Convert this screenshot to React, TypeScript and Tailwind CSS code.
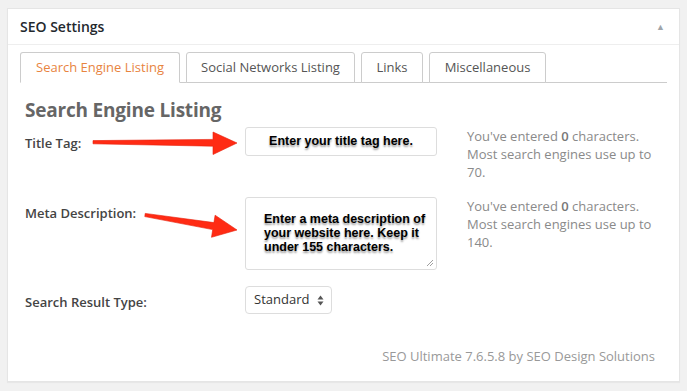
import React from "react";

const tabs = [
  { label: "Search Engine Listing", w: "w-[160px]", active: true },
  { label: "Social Networks Listing", w: "w-[169px]", active: false },
  { label: "Links", w: "w-[62px]", active: false },
  { label: "Miscellaneous", w: "w-[117px]", active: false },
];

function HelpText({ max }: { max: number }) {
  return (
    <p className="w-[195px] shrink-0 text-[13px] leading-[18px] text-[#8a8a8a]">
      You've entered <b className="font-semibold text-[#777]">0</b> characters. Most search engines use up to {max}.
    </p>
  );
}

function Arrows() {
  return (
    <svg className="absolute left-0 top-0 pointer-events-none" width="687" height="391" viewBox="0 0 687 391">
      <polygon
        points="93,140.6 213,139.4 213,132 237,143 213,154.5 213,146.2 93,143.8"
        fill="#ff2b14"
        stroke="#e61f0a"
        strokeWidth="0.6"
        strokeLinejoin="round"
      />
      <polygon
        points="145.2,213.4 213.9,222.6 215.1,215.2 237,230 211.5,237.3 212.7,229.6 144.8,216.6"
        fill="#ff2b14"
        stroke="#e61f0a"
        strokeWidth="0.6"
        strokeLinejoin="round"
      />
    </svg>
  );
}

export default function App() {
  return (
    <div className="relative h-[391px] w-[687px] bg-[#f1f1f1] pl-[7px] pt-[8px] font-['Open_Sans',sans-serif]">
      <div className="h-[374px] w-[673px] border border-[#e5e5e5] bg-white shadow-[0_1px_1px_rgba(0,0,0,0.04)]">
        {/* header */}
        <div className="flex h-[36px] items-center justify-between border-b border-[#eee] pl-[12px] pr-[14px]">
          <h2 className="text-[14px] font-semibold text-[#23282d]">SEO Settings</h2>
          <span className="text-[9px] text-[#a0a5aa]">▲</span>
        </div>

        {/* tabs */}
        <div className="ml-[12px] mr-[12px] mt-[7px] flex gap-[6px] border-b border-[#ccc]">
          {tabs.map((t) => (
            <div
              key={t.label}
              className={`${t.w} -mb-px flex h-[31px] items-center justify-center rounded-t-[3px] border border-[#ccc] text-[13px] ${
                t.active ? "border-b-white bg-white text-[#e8843f]" : "bg-white text-[#555]"
              }`}
            >
              {t.label}
            </div>
          ))}
        </div>

        <div className="pl-[17px] pr-[24px]">
          <h3 className="mt-[15px] text-[19px] leading-[24px] font-bold tracking-[-0.2px] text-[#666]">
            Search Engine Listing
          </h3>

          {/* title tag row */}
          <div className="mt-[5px] flex">
            <div className="w-[220px] shrink-0 pt-[7px] text-[13px] leading-[18px] font-semibold text-[#444]">Title Tag:</div>
            <div className="flex h-[29px] w-[192px] shrink-0 items-center justify-center rounded-[3px] border border-[#ddd] bg-white font-['Liberation_Sans',Arial,sans-serif] text-[12.5px] font-bold text-black [text-shadow:0_2px_2px_rgba(0,0,0,0.4)]">
              Enter your title tag here.
            </div>
            <div className="ml-[30px]">
              <HelpText max={70} />
            </div>
          </div>

          {/* meta description row */}
          <div className="mt-[16px] flex">
            <div className="w-[220px] shrink-0 pt-[7px] text-[13px] leading-[18px] font-semibold text-[#444]">Meta Description:</div>
            <div className="relative h-[73px] w-[192px] shrink-0 rounded-[3px] border border-[#ddd] bg-white pl-[18px] pt-[14px] font-['Liberation_Sans',Arial,sans-serif] text-[12.5px] leading-[14px] font-bold text-black [text-shadow:0_2px_2px_rgba(0,0,0,0.4)]">
              Enter a meta description of your website here. Keep it under 155 characters.
              <svg className="absolute bottom-[2px] right-[2px]" width="8" height="8" viewBox="0 0 8 8">
                <path d="M7 1 L1 7 M7 4 L4 7" stroke="#888" strokeWidth="0.8" />
              </svg>
            </div>
            <div className="ml-[30px]">
              <HelpText max={140} />
            </div>
          </div>

          {/* search result type */}
          <div className="mt-[16px] flex">
            <div className="w-[220px] shrink-0 pt-[7px] text-[13px] leading-[18px] font-semibold text-[#444]">Search Result Type:</div>
            <div className="flex h-[28px] w-[87px] shrink-0 items-center justify-between rounded-[4px] border border-[#ddd] bg-white pl-[8px] pr-[7px] text-[13px] text-[#333]">
              Standard
              <svg width="7" height="11" viewBox="0 0 7 11">
                <path d="M3.5 0.5 L6.5 4.5 L0.5 4.5 Z M3.5 10.5 L6.5 6.5 L0.5 6.5 Z" fill="#555" />
              </svg>
            </div>
          </div>

          <div className="mt-[33px] text-right text-[13px] text-[#999]">
            SEO Ultimate 7.6.5.8 by SEO Design Solutions
          </div>
        </div>
      </div>
      <Arrows />
    </div>
  );
}
